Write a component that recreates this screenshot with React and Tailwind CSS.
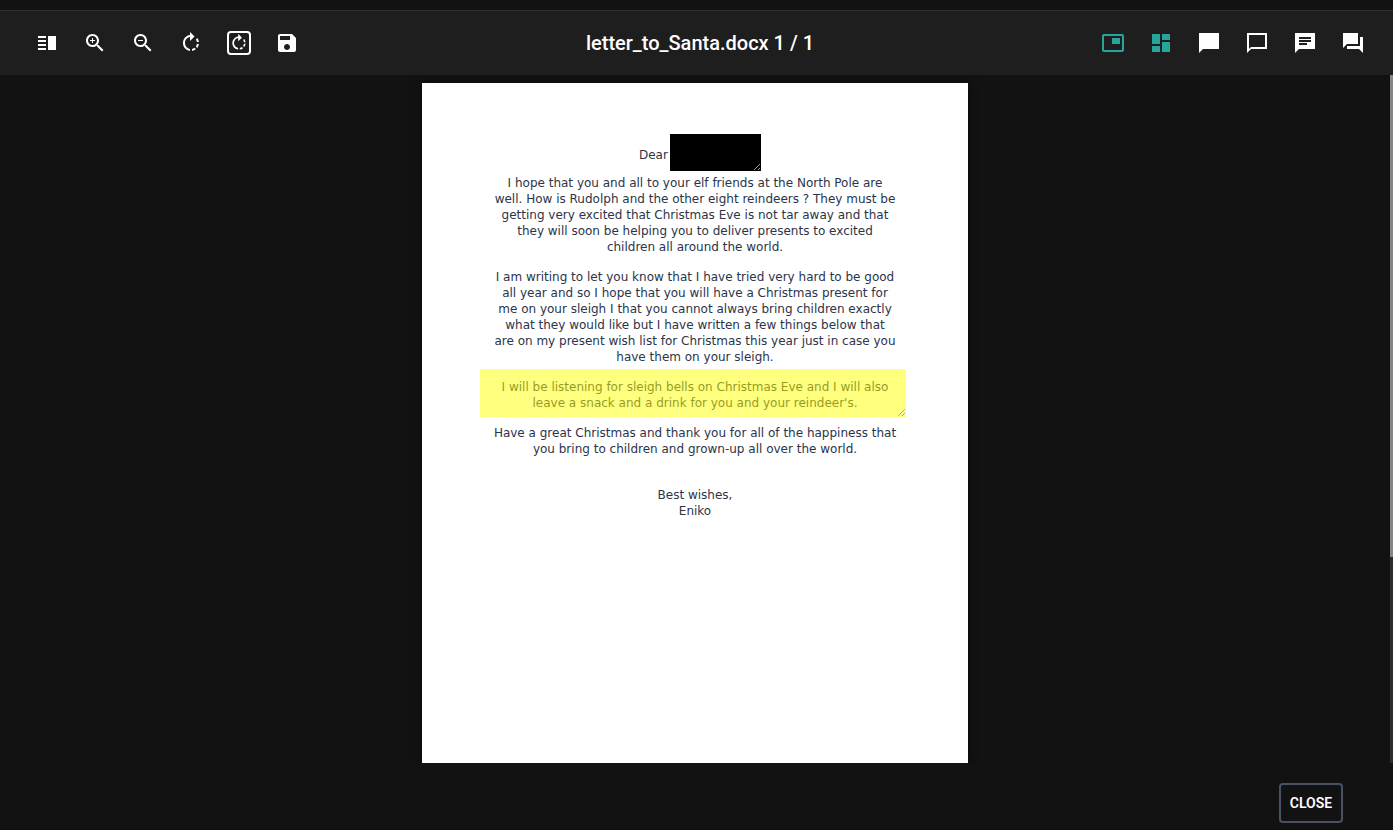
const ICONS = {
  split: "M3 15h8v-2H3v2zm0 4h8v-2H3v2zm0-8h8V9H3v2zm0-6v2h8V5H3zm10 0h8v14h-8V5z",
  zoomIn:
    "M15.5 14h-.79l-.28-.27C15.41 12.59 16 11.11 16 9.5 16 5.91 13.09 3 9.5 3S3 5.91 3 9.5 5.91 16 9.5 16c1.61 0 3.09-.59 4.23-1.57l.27.28v.79l5 4.99L20.49 19l-4.99-5zm-6 0C7.01 14 5 11.99 5 9.5S7.01 5 9.5 5 14 7.01 14 9.5 11.99 14 9.5 14zm2.5-4h-2v2H9v-2H7V9h2V7h1v2h2v1z",
  zoomOut:
    "M15.5 14h-.79l-.28-.27C15.41 12.59 16 11.11 16 9.5 16 5.91 13.09 3 9.5 3S3 5.91 3 9.5 5.91 16 9.5 16c1.61 0 3.09-.59 4.23-1.57l.27.28v.79l5 4.99L20.49 19l-4.99-5zm-6 0C7.01 14 5 11.99 5 9.5S7.01 5 9.5 5 14 7.01 14 9.5 11.99 14 9.5 14zM7 9h5v1H7z",
  rotate:
    "M15.55 5.55L11 1v3.07C7.06 4.56 4 7.92 4 12s3.05 7.44 7 7.93v-2.02c-2.84-.48-5-2.94-5-5.91s2.16-5.43 5-5.91V10l4.55-4.45zM19.93 11c-.17-1.39-.72-2.73-1.62-3.89l-1.42 1.42c.54.75.88 1.6 1.02 2.47h2.02zM13 17.9v2.02c1.39-.17 2.74-.71 3.9-1.61l-1.44-1.44c-.75.54-1.59.89-2.46 1.03zm3.89-2.42l1.42 1.41c.9-1.16 1.45-2.5 1.62-3.89h-2.02c-.14.87-.48 1.72-1.02 2.48z",
  save: "M17 3H5c-1.11 0-2 .9-2 2v14c0 1.1.89 2 2 2h14c1.1 0 2-.9 2-2V7l-4-4zm-5 16c-1.66 0-3-1.34-3-3s1.34-3 3-3 3 1.34 3 3-1.34 3-3 3zm3-10H5V5h10v4z",
  pip: "M19 7h-8v6h8V7zm2-4H3c-1.1 0-2 .9-2 2v14c0 1.1.9 1.98 2 1.98h18c1.1 0 2-.88 2-1.98V5c0-1.1-.9-2-2-2zm0 16.01H3V4.98h18v14.03z",
  dashboard: "M3 13h8V3H3v10zm0 8h8v-6H3v6zm10 0h8V11h-8v10zm0-18v6h8V3h-8z",
  bubble: "M22 2H2v20l4-4h16V2z",
  bubbleOutline: "M22 2H2v20l4-4h16V2zm-2 14H6l-2 2V4h16v12z",
  chat: "M22 2H2.01L2 22l4-4h16V2zM6 9h12v2H6V9zm8 5H6v-2h8v2zm4-6H6V6h12v2z",
  forum: "M22 6h-3v9H6v3h12l4 4V6zm-5 7V2H2v15l4-4h11z",
};

const LEFT_TOOLS = [
  { icon: "split", label: "Toggle sidebar" },
  { icon: "zoomIn", label: "Zoom in" },
  { icon: "zoomOut", label: "Zoom out" },
  { icon: "rotate", label: "Rotate page" },
  { icon: "rotate", label: "Rotate all pages", boxed: true },
  { icon: "save", label: "Save" },
];

const RIGHT_TOOLS = [
  { icon: "pip", label: "Area annotation", active: true },
  { icon: "dashboard", label: "Redaction", active: true },
  { icon: "bubble", label: "Filled comment" },
  { icon: "bubbleOutline", label: "Outlined comment" },
  { icon: "chat", label: "Text comment" },
  { icon: "forum", label: "Discussion" },
];

const LETTER = [
  [
    "I hope that you and all to your elf friends at the North Pole are",
    "well. How is Rudolph and the other eight reindeers ? They must be",
    "getting very excited that Christmas Eve is not tar away and that",
    "they will soon be helping you to deliver presents to excited",
    "children all around the world.",
  ],
  [
    "I am writing to let you know that I have tried very hard to be good",
    "all year and so I hope that you will have a Christmas present for",
    "me on your sleigh I that you cannot always bring children exactly",
    "what they would like but I have written a few things below that",
    "are on my present wish list for Christmas this year just in case you",
    "have them on your sleigh.",
  ],
  [
    "I will be listening for sleigh bells on Christmas Eve and I will also",
    "leave a snack and a drink for you and your reindeer's.",
  ],
  [
    "Have a great Christmas and thank you for all of the happiness that",
    "you bring to children and grown-up all over the world.",
  ],
];

function ToolButton({ icon, label, active, boxed }) {
  return (
    <button
      type="button"
      aria-label={label}
      className={`flex size-12 items-center justify-center ${active ? "text-[#26a69a]" : "text-white"}`}
    >
      <svg
        viewBox="0 0 24 24"
        fill="currentColor"
        aria-hidden="true"
        className={boxed ? "size-6 rounded border-2 border-white" : "size-6"}
      >
        <path d={ICONS[icon]} />
      </svg>
    </button>
  );
}

function Paragraph({ lines }) {
  return (
    <p>
      {lines.map((line) => (
        <span key={line} className="block whitespace-nowrap">
          {line}
        </span>
      ))}
    </p>
  );
}

export default function App() {
  return (
    <div className="flex h-screen flex-col bg-[#121212] pt-2.5 font-[Roboto,sans-serif] text-white">
      <header className="flex h-[65px] shrink-0 items-center justify-between border-t border-[#2e2e2e] bg-[#1e1e1e] pr-4 pl-[23px]">
        <div className="flex">
          {LEFT_TOOLS.map((tool) => (
            <ToolButton key={tool.label} {...tool} />
          ))}
        </div>
        <h1 className="text-xl font-medium">letter_to_Santa.docx 1 / 1</h1>
        <div className="flex">
          {RIGHT_TOOLS.map((tool) => (
            <ToolButton key={tool.label} {...tool} />
          ))}
        </div>
      </header>

      <main className="flex min-h-0 flex-1">
        <div className="flex flex-1 justify-center overflow-hidden pt-2">
          <article className="relative flex w-[546px] flex-col items-center bg-white pt-16 text-center font-['DejaVu_Sans',sans-serif] text-[12px] leading-4 text-[#2b3449] shadow-[0_0_8px_rgba(0,0,0,0.5)]">
            <p className="mb-3 w-28 text-left">Dear</p>
            <div className="flex flex-col gap-3.5">
              {LETTER.map((lines) => (
                <Paragraph key={lines[0]} lines={lines} />
              ))}
            </div>
            <p className="mt-[30px]">
              Best wishes,
              <br />
              Eniko
            </p>
            <textarea
              aria-label="Redacted name"
              className="absolute top-[51px] left-[248px] h-[37px] w-[91px] resize bg-black"
            />
            <textarea
              aria-label="Highlighted passage"
              className="absolute top-[286px] left-[58px] h-12 w-[426px] resize bg-[#ffff00] opacity-50"
            />
          </article>
        </div>
        <div className="w-[3px] bg-[#2c2c2c]" aria-hidden="true">
          <div className="h-[70%] bg-[#868686]" />
        </div>
      </main>

      <footer className="flex shrink-0 justify-end pt-5 pr-[50px] pb-[7px]">
        <button
          type="button"
          className="h-10 w-16 rounded border-2 border-[#4a5162] text-sm font-semibold"
        >
          CLOSE
        </button>
      </footer>
    </div>
  );
}
